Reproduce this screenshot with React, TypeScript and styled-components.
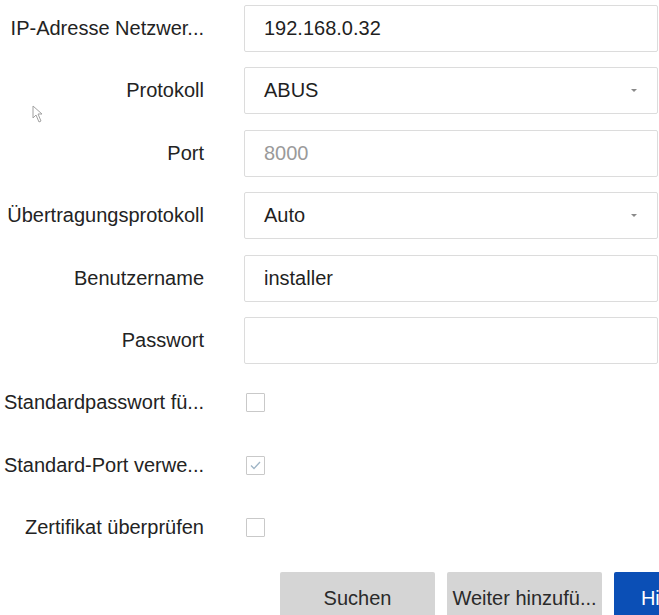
import styled, { createGlobalStyle } from "styled-components";

const GlobalStyle = createGlobalStyle`
  html, body {
    margin: 0;
    background: #fff;
  }
  body {
    font-family: "Liberation Sans", Arial, sans-serif;
    overflow: hidden;
  }
`;

// layout
const Page = styled.div`
  position: relative;
  width: 659px;
  height: 615px;
  overflow: hidden;
  background: #fff;
`;
const Form = styled.div`
  display: flex;
  flex-direction: column;
  gap: 15.4px;
  padding-top: 5px;
`;
const Row = styled.div`
  display: grid;
  grid-template-columns: 204px 414px;
  column-gap: 40px;
  align-items: center;
  height: 47px;
`;
const Label = styled.div`
  text-align: right;
  font-size: 20px;
  color: #232323;
  white-space: nowrap;
`;

// controls
const Field = styled.div<{ $muted?: boolean }>`
  box-sizing: border-box;
  height: 47px;
  display: flex;
  align-items: center;
  justify-content: space-between;
  padding: 0 20px 0 19px;
  border: 1px solid #dcdcdc;
  border-radius: 2px;
  background: #fff;
  font-size: 20px;
  color: ${(p) => (p.$muted ? "#9a9a9a" : "#1f1f1f")};
`;
const Caret = styled.span`
  width: 0;
  height: 0;
  border-left: 3px solid transparent;
  border-right: 3px solid transparent;
  border-top: 3px solid #8a8a8a;
`;
const Check = styled.span`
  box-sizing: border-box;
  width: 19px;
  height: 19px;
  margin-left: 2px;
  border: 1px solid #c9c9c9;
  border-radius: 1px;
  display: flex;
  align-items: center;
  justify-content: center;
`;

// buttons
const ButtonBar = styled.div`
  display: flex;
  gap: 12px;
  padding-left: 280px;
  margin-top: 5.6px;
`;
const Button = styled.div<{ $primary?: boolean }>`
  flex: 0 0 155px;
  height: 52px;
  display: flex;
  align-items: center;
  justify-content: center;
  border-radius: 2px;
  font-size: 20px;
  white-space: nowrap;
  background: ${(p) => (p.$primary ? "#0b4fb6" : "#d5d5d5")};
  color: ${(p) => (p.$primary ? "#fff" : "#2a2a2a")};
`;

// mouse pointer over the form
const Pointer = styled.svg`
  position: absolute;
  left: 32px;
  top: 105px;
  filter: blur(0.6px);
  opacity: 0.55;
`;

type Item =
  | { kind: "text"; label: string; value?: string; muted?: boolean }
  | { kind: "select"; label: string; value: string }
  | { kind: "check"; label: string; checked?: boolean };

const items: Item[] = [
  { kind: "text", label: "IP-Adresse Netzwer...", value: "192.168.0.32" },
  { kind: "select", label: "Protokoll", value: "ABUS" },
  { kind: "text", label: "Port", value: "8000", muted: true },
  { kind: "select", label: "Übertragungsprotokoll", value: "Auto" },
  { kind: "text", label: "Benutzername", value: "installer" },
  { kind: "text", label: "Passwort" },
  { kind: "check", label: "Standardpasswort fü..." },
  { kind: "check", label: "Standard-Port verwe...", checked: true },
  { kind: "check", label: "Zertifikat überprüfen" },
];

function Control({ item }: { item: Item }) {
  if (item.kind === "check") {
    return (
      <div>
        <Check>
          {item.checked && (
            <svg width="11" height="9" viewBox="0 0 11 9">
              <path d="M1 4.5 L4 7.5 L10 1" fill="none" stroke="#9fb5c6" strokeWidth="1.3" />
            </svg>
          )}
        </Check>
      </div>
    );
  }
  if (item.kind === "select") {
    return (
      <Field>
        <span>{item.value}</span>
        <Caret />
      </Field>
    );
  }
  return (
    <Field $muted={item.muted}>
      <span>{item.value}</span>
    </Field>
  );
}

export default function App() {
  return (
    <Page>
      <GlobalStyle />
      <Form>
        {items.map((item) => (
          <Row key={item.label}>
            <Label>{item.label}</Label>
            <Control item={item} />
          </Row>
        ))}
        <ButtonBar>
          <Button>Suchen</Button>
          <Button>Weiter hinzufü...</Button>
          <Button $primary>Hinzufügen</Button>
        </ButtonBar>
      </Form>
      <Pointer width="12" height="18" viewBox="0 0 12 18">
        <path d="M1 1 L1 13 L4 10 L7 17 L9 16 L6 9 L10 9 Z" fill="#fff" stroke="#555" strokeWidth="1" />
      </Pointer>
    </Page>
  );
}
